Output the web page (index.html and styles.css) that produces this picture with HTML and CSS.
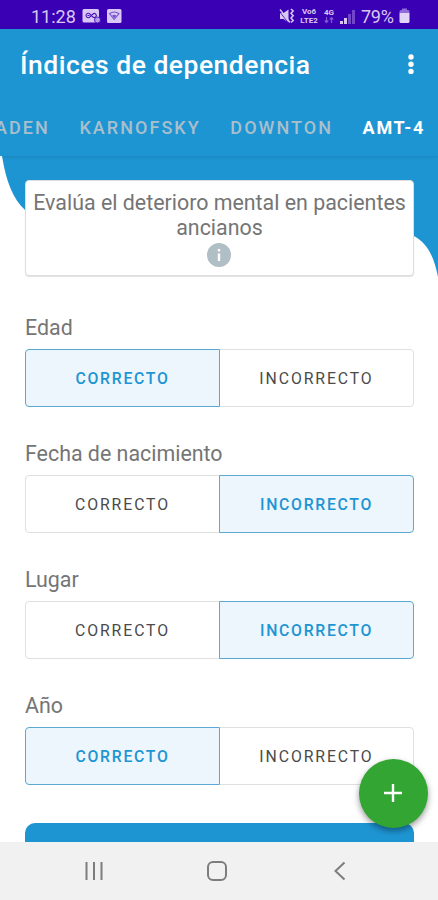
FILE: index.html
```
<!DOCTYPE html>
<html lang="es">
<head>
  <meta charset="UTF-8">
  <title>Índices de dependencia</title>
  <meta name="viewport" content="width=device-width, initial-scale=1.0">
  <link rel="stylesheet" href="styles.css">
</head>
<body>
<div class="screen">

  <!-- Status bar -->
  <div class="status">
    <span class="clock">11:28</span>
    <svg class="notif" width="19" height="16" viewBox="0 0 19 16">
      <rect x="0.5" y="1" width="16.5" height="13.5" rx="1.5" fill="#d9c8f5"/>
      <path d="M8 6.200a2.200 2.200 0 1 0 0 2.600L11 6a2 2 0 1 1 0 3L8 6.200M5.500 7.500h2" fill="none" stroke="#4714b8" stroke-width="1.1"/>
      <circle cx="15.5" cy="12" r="3" fill="#b79ce8" stroke="#3a00b3" stroke-width="0.8"/>
    </svg>
    <svg class="notif" width="15" height="16" viewBox="0 0 15 16">
      <rect x="0" y="1" width="14.5" height="14" rx="1.5" fill="#d9c8f5"/>
      <path d="M2.5 5.7Q7.2 2.2 12 5.7L7.2 11.5Z" fill="none" stroke="#7a52cc" stroke-width="1.1"/>
      <path d="M5 7.6Q7.2 6 9.5 7.6L7.2 10.5Z" fill="#7a52cc"/>
    </svg>
    <svg class="mute" width="16" height="16" viewBox="0 0 16 16">
      <path d="M1 5h3.500L9.500 1.500v13L4.500 11H1Z" fill="#d9c8f5"/>
      <path d="M0 3L9.500 15" stroke="#3a00b3" stroke-width="0.8"/>
      <path d="M1 1.500L11 14.500" stroke="#d9c8f5" stroke-width="1.3"/>
      <path d="M12 1l2.200 2-2.200 2.300 2.200 2.500-2.200 2.300 2.200 2.400-2.200 2" fill="none" stroke="#d9c8f5" stroke-width="1.500"/>
    </svg>
    <div class="net volte"><span>Vo6</span><span>LTE2</span></div>
    <div class="net lte"><span>4G</span>
      <svg width="10" height="7" viewBox="0 0 10 7">
        <path d="M2.500 0v5M0.800 3.500l1.700 2 1.700-2M7.500 6V1M5.800 2.500l1.700-2 1.700 2" fill="none" stroke="#7f58d0" stroke-width="1.200"/>
      </svg>
    </div>
    <svg class="signal" width="15" height="15" viewBox="0 0 15 15">
      <path d="M0 12h3v3H0zM4 9h3v6H4z" fill="#d9c8f5"/>
      <path d="M8 5h3v10H8zM12 1h3v14h-3z" fill="#7146cb"/>
    </svg>
    <span class="percent">79%</span>
    <svg class="battery" width="11" height="16" viewBox="0 0 11 16">
      <path d="M3 0.500h5v2H3z" fill="#8f6cd8"/>
      <path d="M0.500 3.500q0-1.500 1.500-1.500h7q1.500 0 1.500 1.500v1.500h-10z" fill="#8f6cd8"/>
      <path d="M0.500 5h10v8.500q0 1.500-1.500 1.500h-7q-1.500 0-1.500-1.500z" fill="#e2d5f8"/>
    </svg>
  </div>

  <!-- Title and tabs -->
  <header class="appbar">
    <div class="title-row">
      <h1>Índices de dependencia</h1>
      <svg class="more" width="8" height="22" viewBox="0 0 8 22" fill="#fff">
        <circle cx="4" cy="3" r="2.700"/><circle cx="4" cy="10.200" r="2.700"/><circle cx="4" cy="17.400" r="2.700"/>
      </svg>
    </div>
    <nav class="tabs">
      <span class="tab">ADEN</span>
      <span class="tab">KARNOFSKY</span>
      <span class="tab">DOWNTON</span>
      <span class="tab active">AMT-4</span>
    </nav>
  </header>

  <main class="content">
    <svg class="wave" width="438" height="130" viewBox="0 0 438 130">
      <path d="M2 0C6 25 13 43 25 54C110 134 320 50 414 80C427 87 434 100 438 121V0Z" fill="#1e95d3"/>
    </svg>

    <section class="info">
      <p>Evalúa el deterioro mental en pacientes ancianos</p>
      <svg width="24" height="24" viewBox="0 0 24 24">
        <circle cx="12" cy="12" r="12" fill="#b0bec5"/>
        <path d="M10.800 6h2.400v2.400h-2.400zM10.800 10.500h2.400v7.500h-2.400z" fill="#fff"/>
      </svg>
    </section>

    <div class="question">
      <label>Edad</label>
      <div class="toggle">
        <button class="option selected">CORRECTO</button>
        <button class="option">INCORRECTO</button>
      </div>
    </div>

    <div class="question">
      <label>Fecha de nacimiento</label>
      <div class="toggle">
        <button class="option">CORRECTO</button>
        <button class="option selected">INCORRECTO</button>
      </div>
    </div>

    <div class="question">
      <label>Lugar</label>
      <div class="toggle">
        <button class="option">CORRECTO</button>
        <button class="option selected">INCORRECTO</button>
      </div>
    </div>

    <div class="question">
      <label>Año</label>
      <div class="toggle">
        <button class="option selected">CORRECTO</button>
        <button class="option">INCORRECTO</button>
      </div>
    </div>

    <div class="result"></div>
  </main>

  <!-- Floating button -->
  <button class="fab">
    <svg width="18" height="18" viewBox="0 0 18 18">
      <path d="M9 0v18M0 9h18" stroke="#fff" stroke-width="2.400"/>
    </svg>
  </button>

  <!-- System navigation -->
  <footer class="navbar">
    <svg width="20" height="20" viewBox="0 0 20 20">
      <path d="M2.500 1v18M10 1v18M17.500 1v18" stroke="#7d7d7d" stroke-width="2"/>
    </svg>
    <svg width="20" height="20" viewBox="0 0 20 20">
      <rect x="1" y="1" width="18" height="18" rx="5" fill="none" stroke="#7d7d7d" stroke-width="2"/>
    </svg>
    <svg width="20" height="20" viewBox="0 0 20 20">
      <path d="M14.500 1.500L5.500 10l9 8.500" fill="none" stroke="#7d7d7d" stroke-width="2"/>
    </svg>
  </footer>
</div>
</body>
</html>
```
FILE: styles.css
```
* { box-sizing: border-box; }
body { margin: 0; font-family: Roboto, sans-serif; background: #fff; color: #757575; }
.screen {
  position: relative; width: 438px; height: 900px; overflow: hidden;
  display: flex; flex-direction: column;
}

.status {
  flex: none; height: 29px; padding: 3px 28px 0 31px;
  display: flex; align-items: center;
  background: #3a00b3; color: #d9c8f5;
}
.clock { width: 51px; font-size: 18px; }
.notif { margin-right: 6px; }
.mute { margin-left: auto; }
.net {
  display: flex; flex-direction: column; align-items: center;
  font-size: 8px; line-height: 9px; font-weight: bold; white-space: nowrap;
}
.volte { width: 20px; margin-left: 4px; }
.lte { width: 12px; margin-left: 4px; }
.signal { margin-left: 5px; }
.percent { width: 37px; margin-left: 6px; font-size: 18px; letter-spacing: -0.3px; }
.battery { margin-left: 1px; }

.appbar {
  flex: none; height: 127px; background: #1e95d3; color: #fff;
  box-shadow: 0 1px 4px rgba(0, 0, 0, 0.12); position: relative; z-index: 1;
}
.title-row {
  height: 71px; padding: 0 23px 0 20px;
  display: flex; align-items: center; justify-content: space-between;
}
h1 { margin: 0; font-size: 26.5px; font-weight: 500; letter-spacing: 0.5px; }
.tabs {
  height: 56px; padding: 0 13px 2px 0;
  display: flex; align-items: center; justify-content: flex-end; gap: 29.5px;
}
.tab { font-size: 18px; font-weight: 500; letter-spacing: 2.05px; color: #a9bfcc; white-space: nowrap; }
.tab.active { color: #fff; font-weight: bold; letter-spacing: 1.7px; }

.content { flex: 1; min-height: 0; overflow: hidden; padding: 24px 24px 0 25px; position: relative; }
.wave { position: absolute; left: 0; top: 0; }
.info {
  position: relative; height: 96px; padding: 9px 0 0; margin-bottom: 39px;
  background: #fff; border: 1px solid #dedede; border-radius: 4px;
  box-shadow: 0 1px 1px rgba(0, 0, 0, 0.12); text-align: center;
}
.info p { margin: 0; font-size: 21.4px; line-height: 25px; }
.info svg { display: block; margin: 3px 0 0 181px; }

.question { height: 126px; }
.question label { display: block; height: 33.5px; font-size: 21.4px; line-height: 25px; }
.toggle { display: flex; }
.option {
  width: 195px; height: 58px; padding: 2px 0 0; background: #fff;
  border: 1px solid #e0e0e0; border-radius: 4px 0 0 4px;
  font-family: inherit; font-size: 15.8px; letter-spacing: 1.9px; color: #4a4a4a;
}
.option + .option { margin-left: -1px; border-radius: 0 4px 4px 0; }
.option.selected {
  position: relative; background: #edf6fc; border-color: #5ba9d0;
  color: #1e95d3; font-weight: 500; letter-spacing: 1.7px;
}
.result { height: 60px; margin-top: 4px; background: #1e95d3; border-radius: 10px; }

.fab {
  position: absolute; left: 359px; top: 759px; z-index: 2;
  width: 69px; height: 69px; padding: 0 1px 1px 0; border: none; border-radius: 50%;
  display: flex; align-items: center; justify-content: center;
  background: #32a532; box-shadow: 0 3px 6px rgba(0, 0, 0, 0.4);
}

.navbar {
  flex: none; height: 58px; padding: 0 88px 0 84px;
  display: flex; align-items: center; justify-content: space-between;
  background: #f1f1f1;
}
```
